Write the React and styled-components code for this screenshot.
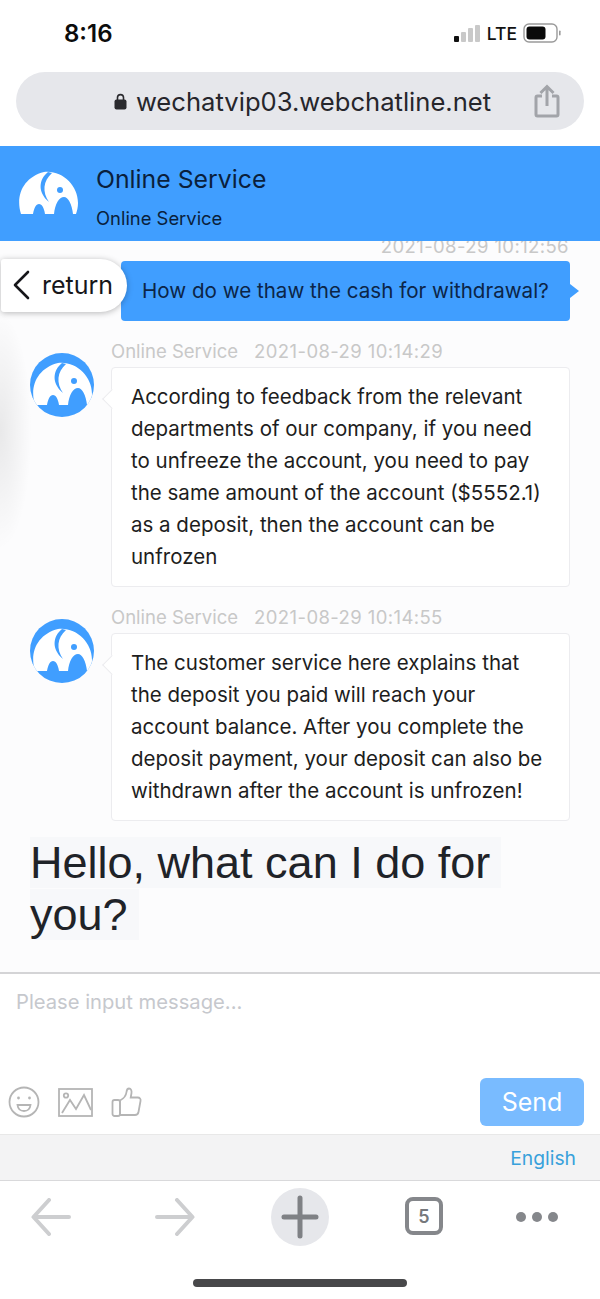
import React from 'react';
import styled, { createGlobalStyle } from 'styled-components';

const GlobalStyle = createGlobalStyle`
  html, body {
    margin: 0;
    padding: 0;
    background: #fff;
  }
  * {
    box-sizing: border-box;
  }
`;

const Page = styled.div`
  width: 600px;
  height: 1299px;
  display: flex;
  flex-direction: column;
  overflow: hidden;
  background: #fff;
  font-family: Inter, 'Liberation Sans', sans-serif;
`;

const StatusBar = styled.div`
  height: 72px;
  flex: none;
  display: flex;
  align-items: center;
  justify-content: space-between;
  padding: 0 39px 6px 64px;
`;

const Time = styled.span`
  font-size: 24px;
  font-weight: 600;
  color: #0c0c0c;
`;

const StatusIcons = styled.div`
  display: flex;
  align-items: center;
  gap: 6px;
`;

const Lte = styled.span`
  font-size: 17.5px;
  font-weight: 500;
  color: #111;
`;

const UrlRow = styled.div`
  height: 74px;
  flex: none;
  padding: 0 16px 16px;
`;

const UrlBar = styled.div`
  height: 58px;
  border-radius: 29px;
  background: #e6e7eb;
  position: relative;
  display: flex;
  align-items: center;
  justify-content: center;
  gap: 9px;
  padding-left: 5px;
`;

const UrlText = styled.span`
  font-size: 25.6px;
  color: #26262b;
`;

const ShareSlot = styled.div`
  position: absolute;
  right: 24px;
  top: 12px;
`;

const Header = styled.header`
  height: 95px;
  flex: none;
  background: #409eff;
  display: flex;
  align-items: center;
  padding: 0 0 0 18px;
  gap: 18px;
`;

const HeaderLogoSlot = styled.div`
  display: flex;
  margin-top: -2px;
`;

const HeaderText = styled.div`
  display: flex;
  flex-direction: column;
  gap: 12px;
  padding-top: 6px;
  color: #0a1f3c;
`;

const HeaderTitle = styled.div`
  font-size: 24.8px;
  line-height: 30px;
`;

const HeaderSub = styled.div`
  font-size: 18.4px;
  line-height: 24px;
`;

const Chat = styled.main`
  flex: 1;
  min-height: 0;
  position: relative;
  overflow: hidden;
  background: #fcfcfd;

  &::before {
    content: '';
    position: absolute;
    left: 0;
    top: 70px;
    width: 32px;
    height: 240px;
    background: radial-gradient(ellipse at left center, rgba(0, 0, 0, 0.08), rgba(0, 0, 0, 0) 70%);
  }
`;

const ReturnButton = styled.button`
  position: absolute;
  left: 1px;
  top: 18px;
  width: 126px;
  height: 53px;
  border: none;
  border-radius: 3px 27px 27px 3px;
  background: #fff;
  box-shadow: 0 1px 6px rgba(0, 0, 0, 0.28);
  display: flex;
  align-items: center;
  gap: 12px;
  padding: 0 0 2px 12px;
  font-family: inherit;
  font-size: 25px;
  color: #16161a;
  z-index: 2;
`;

const SentTime = styled.div`
  margin-top: -5px;
  height: 20px;
  line-height: 20px;
  padding-right: 31px;
  text-align: right;
  font-size: 18.5px;
  letter-spacing: 0.4px;
  color: #c8c8c8;
`;

const SentRow = styled.div`
  margin: 5px 0 0 121px;
  width: 449px;
  height: 60px;
  position: relative;
  background: #409eff;
  border-radius: 4px;
  display: flex;
  align-items: center;
  padding: 0 0 2px 21px;
  font-size: 20.6px;
  color: #0c2547;

  &::after {
    content: '';
    position: absolute;
    left: 100%;
    top: 23px;
    border-style: solid;
    border-width: 7px 0 7px 9px;
    border-color: transparent transparent transparent #409eff;
  }
`;

const MessageRow = styled.div`
  display: grid;
  grid-template-columns: 64px 1fr;
  column-gap: 17px;
  padding: 0 30px;
  margin-top: ${(p) => p.$top}px;
`;

const AvatarSlot = styled.div`
  padding-top: 12px;
`;

const Meta = styled.div`
  height: 20px;
  line-height: 20px;
  margin-bottom: 6px;
  display: flex;
  gap: 16px;
  font-size: 18.5px;
  color: #c8c8c8;
`;

const MetaDate = styled.span`
  letter-spacing: 0.4px;
`;

const Bubble = styled.div`
  position: relative;
  background: #fff;
  border: 1px solid #ececef;
  border-radius: 4px;
  padding: 13px 19px 13px 19px;
  font-size: 20.5px;
  line-height: 32px;
  color: #1d1d20;

  &::before {
    content: '';
    position: absolute;
    left: -7px;
    top: 24px;
    width: 13px;
    height: 13px;
    background: #fff;
    border-left: 1px solid #ececef;
    border-bottom: 1px solid #ececef;
    transform: rotate(45deg);
  }
`;

const Greeting = styled.div`
  margin: 16px 30px 0;
  font-family: 'Liberation Sans', Arial, sans-serif;
  font-size: 45px;
  line-height: 52px;
  color: #1f2328;
`;

const GreetingText = styled.span`
  background: #f7f8fa;
  padding-right: 11px;
  box-decoration-break: clone;
  -webkit-box-decoration-break: clone;
`;

const Composer = styled.section`
  height: 162px;
  flex: none;
  background: #fff;
  border-top: 2px solid #d4d4d6;
  display: flex;
  flex-direction: column;
  padding: 14px 16px 8px 8px;
`;

const Placeholder = styled.div`
  padding-left: 8px;
  font-size: 20.2px;
  line-height: 28px;
  color: #c6c8cd;
`;

const ComposerFoot = styled.div`
  margin-top: auto;
  display: flex;
  align-items: center;
  justify-content: space-between;
`;

const Tools = styled.div`
  display: flex;
  align-items: center;
  gap: 18px;
`;

const SendButton = styled.button`
  width: 104px;
  height: 48px;
  border: none;
  border-radius: 6px;
  background: #79bbff;
  color: #fff;
  font-family: inherit;
  font-size: 25px;
`;

const LangBar = styled.div`
  height: 47px;
  flex: none;
  background: #f3f3f4;
  border-top: 1px solid #e8e8e8;
  border-bottom: 1px solid #d9d9db;
  display: flex;
  align-items: center;
  justify-content: flex-end;
  padding-right: 24px;
  font-size: 19.3px;
  color: #38a1db;
`;

const BrowserBar = styled.nav`
  height: 72px;
  flex: none;
  display: grid;
  grid-template-columns: 102px 146px 104px 144px 82px;
  align-items: center;
  justify-items: center;
`;

const PlusCircle = styled.div`
  width: 58px;
  height: 58px;
  border-radius: 50%;
  background: #e6e7eb;
  display: flex;
  align-items: center;
  justify-content: center;
`;

const TabCount = styled.div`
  width: 38px;
  height: 38px;
  margin-top: -2px;
  border: 4px solid #85878b;
  border-radius: 8px;
  display: flex;
  align-items: center;
  justify-content: center;
  font-size: 18px;
  font-weight: 600;
  color: #76787c;
`;

const Dots = styled.div`
  display: flex;
  gap: 6px;
`;

const Dot = styled.span`
  width: 10px;
  height: 10px;
  border-radius: 50%;
  background: #85878b;
`;

const HomeSlot = styled.div`
  height: 46px;
  flex: none;
  display: flex;
  justify-content: center;
  padding-top: 26px;
`;

const HomeBar = styled.div`
  width: 214px;
  height: 8px;
  border-radius: 4px;
  background: #48484a;
`;

const ELEPHANT =
  'M3 43C-3 24 6 6 26 1C44-1 60 14 60 32C60 36 59 40 58 43L55 43C54 33 50 26 46 26C41 26 37 33 36 43L27 43C26 37 24 33 21 33C18 33 16 37 15 43Z';
const EAR = 'M30 1C21 8 19 21 31 31C24 21 25 10 34 2Z';

const HeaderLogo = () => (
  <svg width="60" height="44" viewBox="0 0 60 44" aria-hidden="true">
    <path d={ELEPHANT} fill="#fff" />
    <path d={EAR} fill="#409eff" />
    <circle cx="42" cy="19" r="3" fill="#409eff" />
  </svg>
);

const Avatar = () => (
  <svg width="64" height="64" viewBox="0 0 64 64" aria-hidden="true">
    <defs>
      <clipPath id="avatar-clip">
        <circle cx="32" cy="32" r="32" />
      </clipPath>
    </defs>
    <circle cx="32" cy="32" r="32" fill="#409eff" />
    <g clipPath="url(#avatar-clip)">
      <g transform="translate(2 9)">
        <path d={ELEPHANT} fill="#fff" />
        <path d={EAR} fill="#409eff" />
        <circle cx="42" cy="19" r="3" fill="#409eff" />
      </g>
    </g>
  </svg>
);

const SignalIcon = () => (
  <svg width="27" height="17" viewBox="0 0 27 17" aria-hidden="true">
    <rect x="0" y="11" width="5" height="6" rx="1" fill="#111" />
    <rect x="7" y="7" width="5" height="10" rx="1" fill="#c9c9c9" />
    <rect x="14" y="3" width="5" height="14" rx="1" fill="#c9c9c9" />
    <rect x="21" y="0" width="5" height="17" rx="1" fill="#c9c9c9" />
  </svg>
);

const BatteryIcon = () => (
  <svg width="38" height="20" viewBox="0 0 38 20" aria-hidden="true">
    <rect x="1" y="1" width="33" height="18" rx="5" fill="none" stroke="#9a9a9a" strokeWidth="1.4" />
    <rect x="3.5" y="3.5" width="19" height="13" rx="3" fill="#0a0a0a" />
    <rect x="36" y="7.5" width="1.6" height="5" rx="0.8" fill="#9a9a9a" />
  </svg>
);

const LockIcon = () => (
  <svg width="13" height="17" viewBox="0 0 13 17" aria-hidden="true">
    <path d="M3.5 7V4.6a3 3 0 0 1 6 0V7" fill="none" stroke="#2a2a2e" strokeWidth="1.6" />
    <rect x="0.5" y="6.5" width="12" height="10" rx="2" fill="#2a2a2e" />
  </svg>
);

const ShareIcon = () => (
  <svg width="26" height="34" viewBox="0 0 26 34" fill="none" stroke="#a2a4a9" strokeWidth="3" aria-hidden="true">
    <path d="M8 12H3.5a1.5 1.5 0 0 0-1.5 1.5v17A1.5 1.5 0 0 0 3.5 32h19a1.5 1.5 0 0 0 1.5-1.5v-17a1.5 1.5 0 0 0-1.5-1.5H18" />
    <path d="M13 22V3M6.5 9L13 2.5 19.5 9" />
  </svg>
);

const SmileIcon = () => (
  <svg width="32" height="32" viewBox="0 0 32 32" fill="none" stroke="#b5b5b5" strokeWidth="1.8" aria-hidden="true">
    <circle cx="16" cy="16" r="14.5" />
    <circle cx="10.5" cy="12" r="1.4" fill="#b5b5b5" stroke="none" />
    <circle cx="21.5" cy="12" r="1.4" fill="#b5b5b5" stroke="none" />
    <path d="M9.5 19h13c-.5 4-3 6-6.5 6s-6-2-6.5-6z" />
  </svg>
);

const ImageIcon = () => (
  <svg width="35" height="29" viewBox="0 0 35 29" fill="none" stroke="#b5b5b5" strokeWidth="1.8" aria-hidden="true">
    <rect x="1" y="1" width="33" height="27" />
    <circle cx="8" cy="7.5" r="2.2" />
    <path d="M4 25L12 12L18 21L26 7L33 22" />
  </svg>
);

const ThumbIcon = () => (
  <svg width="31" height="31" viewBox="0 0 31 31" fill="none" stroke="#b5b5b5" strokeWidth="1.8" aria-hidden="true">
    <path d="M9 13.5c3-1.5 6-4.5 6.5-8.5.2-2 1-3.5 2.5-3.5 2 0 2.800 2 2.500 4.500l-.8 4.500h7c2 0 3.300 1.500 2.800 3.500l-2 11c-.4 2-1.500 3-3.500 3H9z" />
    <rect x="1.5" y="13" width="7.5" height="16" rx="2" />
  </svg>
);

const ArrowIcon = ({ flip }) => (
  <svg
    width="40"
    height="38"
    viewBox="0 0 40 38"
    fill="none"
    stroke="#cdced0"
    strokeWidth="4"
    strokeLinecap="round"
    strokeLinejoin="round"
    style={flip ? { transform: 'scaleX(-1)' } : undefined}
    aria-hidden="true"
  >
    <path d="M38 19H3M18 2L2.5 19L18 36" />
  </svg>
);

const PlusIcon = () => (
  <svg width="38" height="44" viewBox="0 0 38 44" fill="none" stroke="#7f8185" strokeWidth="5" strokeLinecap="round" aria-hidden="true">
    <path d="M19 3V41M3 22H35" />
  </svg>
);

const BackChevron = () => (
  <svg width="17" height="30" viewBox="0 0 17 30" fill="none" stroke="#16161a" strokeWidth="2.6" strokeLinecap="round" strokeLinejoin="round" aria-hidden="true">
    <path d="M15 2L2 15L15 28" />
  </svg>
);

const App = () => (
  <Page>
    <GlobalStyle />
    <StatusBar>
      <Time>8:16</Time>
      <StatusIcons>
        <SignalIcon />
        <Lte>LTE</Lte>
        <BatteryIcon />
      </StatusIcons>
    </StatusBar>
    <UrlRow>
      <UrlBar>
        <LockIcon />
        <UrlText>wechatvip03.webchatline.net</UrlText>
        <ShareSlot>
          <ShareIcon />
        </ShareSlot>
      </UrlBar>
    </UrlRow>
    <Header>
      <HeaderLogoSlot>
        <HeaderLogo />
      </HeaderLogoSlot>
      <HeaderText>
        <HeaderTitle>Online Service</HeaderTitle>
        <HeaderSub>Online Service</HeaderSub>
      </HeaderText>
    </Header>
    <Chat>
      <ReturnButton>
        <BackChevron />
        return
      </ReturnButton>
      <SentTime>2021-08-29 10:12:56</SentTime>
      <SentRow>How do we thaw the cash for withdrawal?</SentRow>
      <MessageRow $top={20}>
        <AvatarSlot>
          <Avatar />
        </AvatarSlot>
        <div>
          <Meta>
            <span>Online Service</span>
            <MetaDate>2021-08-29 10:14:29</MetaDate>
          </Meta>
          <Bubble>
            According to feedback from the relevant departments of our company, if you need to unfreeze the
            account, you need to pay the same amount of the account ($5552.1) as a deposit, then the account can be
            unfrozen
          </Bubble>
        </div>
      </MessageRow>
      <MessageRow $top={20}>
        <AvatarSlot>
          <Avatar />
        </AvatarSlot>
        <div>
          <Meta>
            <span>Online Service</span>
            <MetaDate>2021-08-29 10:14:55</MetaDate>
          </Meta>
          <Bubble>
            The customer service here explains that the deposit you paid will reach your account balance. After you
            complete the deposit payment, your deposit can also be withdrawn after the account is unfrozen!
          </Bubble>
        </div>
      </MessageRow>
      <Greeting>
        <GreetingText>Hello, what can I do for you?</GreetingText>
      </Greeting>
    </Chat>
    <Composer>
      <Placeholder>Please input message...</Placeholder>
      <ComposerFoot>
        <Tools>
          <SmileIcon />
          <ImageIcon />
          <ThumbIcon />
        </Tools>
        <SendButton>Send</SendButton>
      </ComposerFoot>
    </Composer>
    <LangBar>English</LangBar>
    <BrowserBar>
      <ArrowIcon />
      <ArrowIcon flip />
      <PlusCircle>
        <PlusIcon />
      </PlusCircle>
      <TabCount>5</TabCount>
      <Dots>
        <Dot />
        <Dot />
        <Dot />
      </Dots>
    </BrowserBar>
    <HomeSlot>
      <HomeBar />
    </HomeSlot>
  </Page>
);

export default App;
